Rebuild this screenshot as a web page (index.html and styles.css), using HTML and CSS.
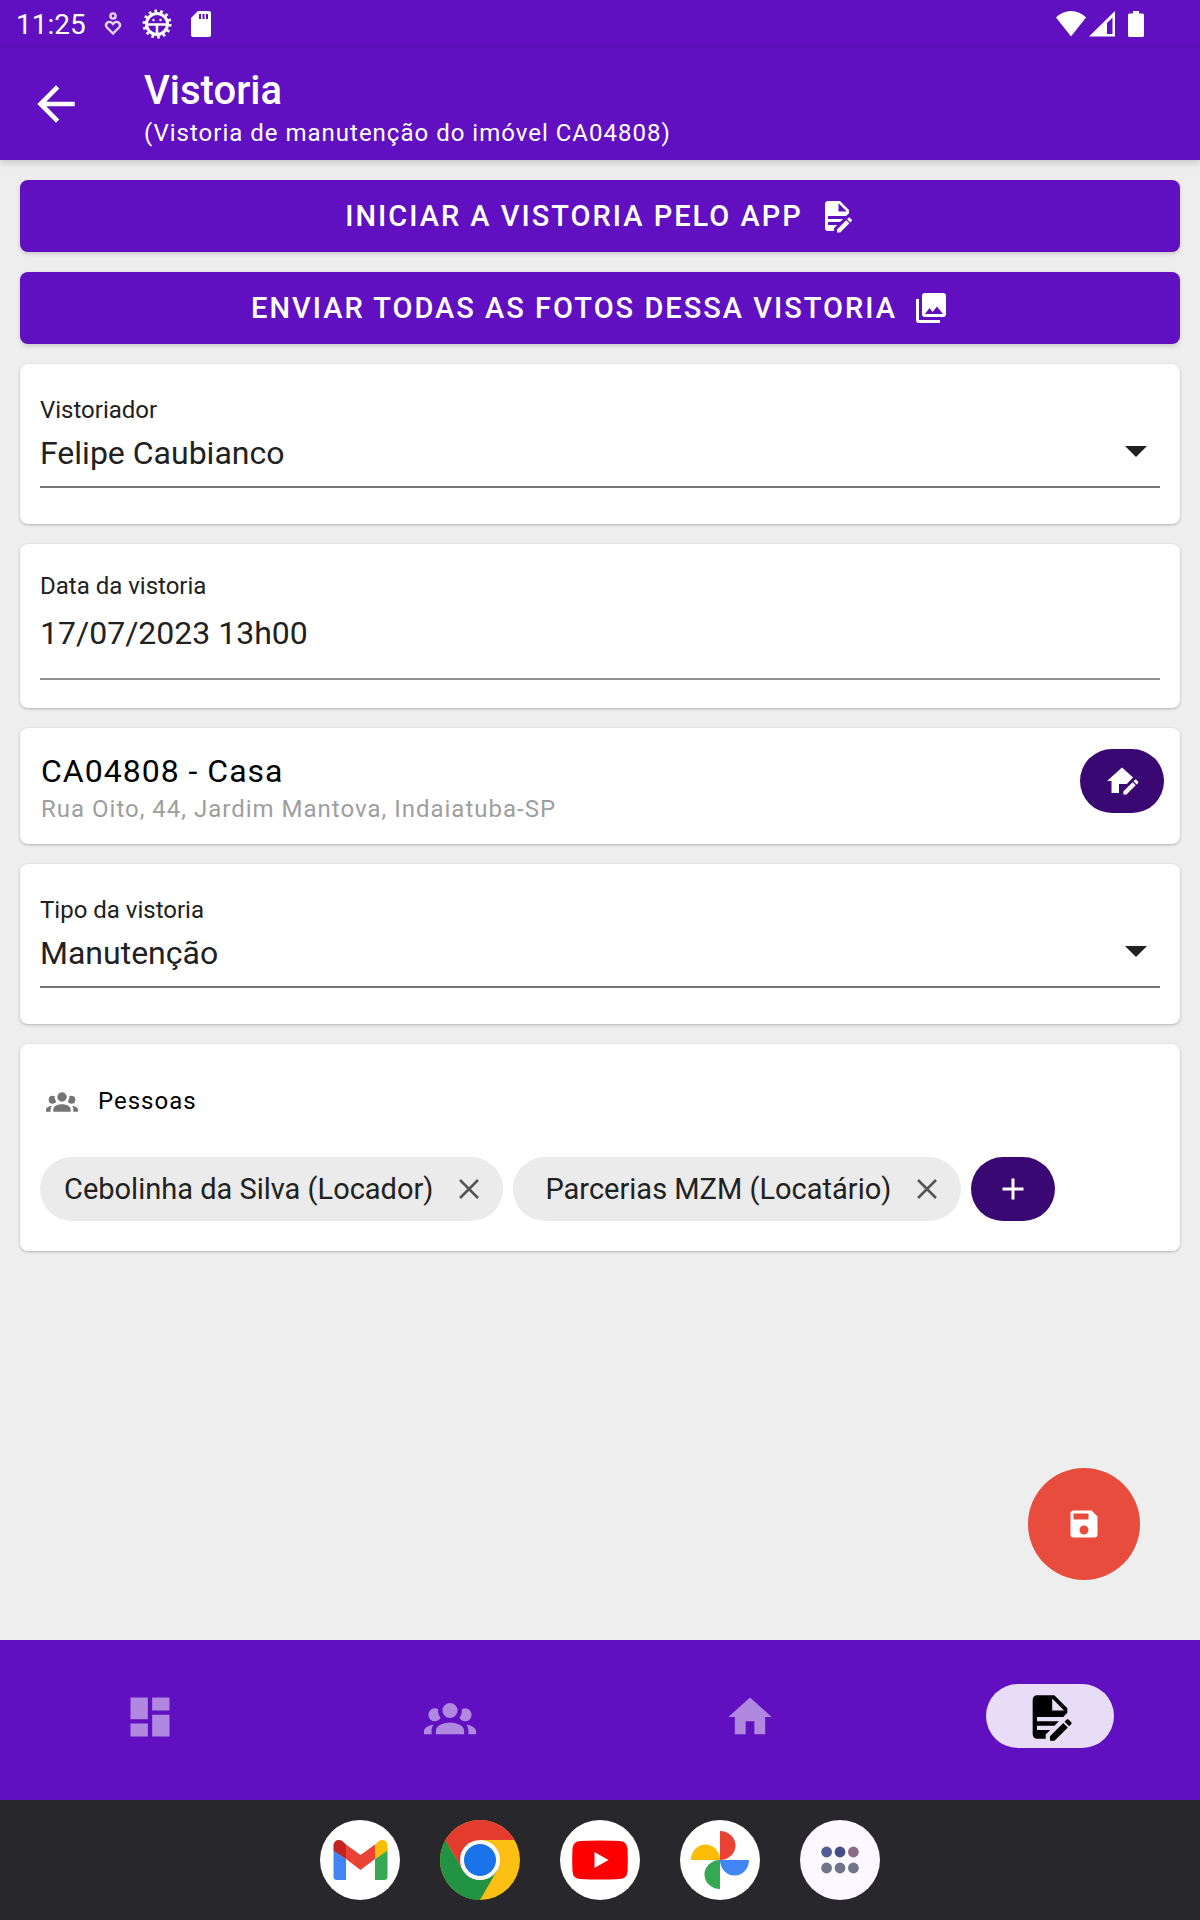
FILE: index.html
```
<!DOCTYPE html>
<html lang="pt-BR">
<head>
    <meta charset="UTF-8">
    <meta name="viewport" content="width=device-width, initial-scale=1.0">
    <title>Vistoria</title>
    <link rel="stylesheet" href="styles.css">
</head>
<body>
    <div class="status-bar">
        <span class="clock">11:25</span>
        <svg class="status-icon heart" viewBox="0 0 20 24" fill="none" stroke="#e3d3f5" stroke-width="2.4">
            <circle cx="10" cy="4" r="2.600"/>
            <path d="M10 21.500L4 15.500a3.400 3.400 0 0 1 0-4.600a3.400 3.400 0 0 1 4.800 0L10 12.100l1.200-1.200a3.400 3.400 0 0 1 4.800 0a3.400 3.400 0 0 1 0 4.600z"/>
        </svg>
        <svg class="status-icon gear" viewBox="0 0 30 30" fill="none" stroke="#fff">
            <circle cx="15" cy="15" r="13" stroke-width="3" stroke-dasharray="2.600 3.234"/>
            <circle cx="15" cy="15" r="10.500" stroke-width="3"/>
            <path d="M5 15.500h20M15 15.500V25" stroke-width="2.600"/>
            <circle cx="11.500" cy="11" r="1.200" fill="#fff" stroke="none"/>
            <circle cx="18.500" cy="11" r="1.200" fill="#fff" stroke="none"/>
        </svg>
        <svg class="status-icon sd" viewBox="0 0 20 26">
            <path fill="#fff" d="M7 0h11a2 2 0 0 1 2 2v22a2 2 0 0 1-2 2H2a2 2 0 0 1-2-2V7z"/>
            <path fill="#6010c0" d="M8 3h2v5H8zM11.500 3h2v5h-2zM15 3h2v5h-2z"/>
        </svg>
        <div class="status-right">
            <svg class="status-icon wifi" viewBox="0 0 30 26">
                <path fill="#fff" d="M0 6.500Q6.500 0 15 0t15 6.500L15 25.500z"/>
            </svg>
            <svg class="status-icon signal" viewBox="0 0 26 26">
                <path fill="#fff" fill-rule="evenodd" d="M26 0v25.500H0zM23.500 6.500L18 12v11h5.500z"/>
            </svg>
            <svg class="status-icon battery" viewBox="0 0 16 26">
                <path fill="#fff" d="M5 0h6v2.500h3.500A1.500 1.500 0 0 1 16 4v20.500a1.500 1.500 0 0 1-1.500 1.500h-13A1.500 1.500 0 0 1 0 24.500V4a1.500 1.500 0 0 1 1.500-1.500H5z"/>
            </svg>
        </div>
    </div>

    <header class="header">
        <a href="#voltar" class="back" aria-label="Voltar">
            <svg viewBox="0 0 24 24"><path d="M20 11H7.830l5.590-5.590L12 4l-8 8 8 8 1.410-1.410L7.830 13H20v-2z"/></svg>
        </a>
        <div class="header-text">
            <h1>Vistoria</h1>
            <p>(Vistoria de manutenção do imóvel CA04808)</p>
        </div>
    </header>

    <main class="content">
        <button type="button" class="action-button">
            <span>INICIAR A VISTORIA PELO APP</span>
            <svg class="icon" viewBox="0 0 24 24"><path d="M6,2C4.890,2 4,2.900 4,4V20A2,2 0 0,0 6,22H10V20.090L12.090,18H6V16H14.090L16.090,14H6V12H18.090L20,10.090V8L14,2H6M13,3.500L18.500,9H13V3.500M20.150,13C20,13 19.860,13.050 19.750,13.160L18.730,14.180L20.820,16.260L21.840,15.250C22.050,15.030 22.050,14.670 21.840,14.460L20.540,13.160C20.430,13.050 20.290,13 20.150,13M18.140,14.770L12,20.920V23H14.080L20.230,16.850L18.140,14.770Z"/></svg>
        </button>
        <button type="button" class="action-button">
            <span>ENVIAR TODAS AS FOTOS DESSA VISTORIA</span>
            <svg class="icon" viewBox="0 0 24 24"><path d="M22,16V4A2,2 0 0,0 20,2H8A2,2 0 0,0 6,4V16A2,2 0 0,0 8,18H20A2,2 0 0,0 22,16M11,12L13.030,14.710L16,11L20,16H8L11,12M2,6V20A2,2 0 0,0 4,22H18V20H4V6H2Z"/></svg>
        </button>

        <section class="card select-card">
            <label for="vistoriador">Vistoriador</label>
            <div class="select-wrap">
                <select id="vistoriador">
                    <option>Felipe Caubianco</option>
                </select>
                <svg class="arrow" viewBox="0 0 22 11"><path d="M0 0h22L11 11z"/></svg>
            </div>
        </section>

        <section class="card date-card">
            <label for="data">Data da vistoria</label>
            <input type="text" id="data" value="17/07/2023 13h00">
        </section>

        <section class="card property-card">
            <div class="property-text">
                <h2>CA04808 - Casa</h2>
                <p>Rua Oito, 44, Jardim Mantova, Indaiatuba-SP</p>
            </div>
            <button type="button" class="round-button" aria-label="Editar imóvel">
                <svg class="icon" viewBox="0 0 24 24">
                    <path d="M12 3L2 12H5V20H10V14H15.200L19.400 9.700z"/>
                    <path d="M21.050 11c-.150 0-.290.050-.400.160l-1.020 1.020 2.090 2.080 1.020-1.010c.210-.220.210-.580 0-.790l-1.300-1.300c-.110-.110-.250-.160-.390-.160M19.040 12.770L12.900 18.920V21h2.080l6.150-6.150z"/>
                </svg>
            </button>
        </section>

        <section class="card select-card">
            <label for="tipo">Tipo da vistoria</label>
            <div class="select-wrap">
                <select id="tipo">
                    <option>Manutenção</option>
                </select>
                <svg class="arrow" viewBox="0 0 22 11"><path d="M0 0h22L11 11z"/></svg>
            </div>
        </section>

        <section class="card people-card">
            <div class="people-title">
                <svg viewBox="0 0 24 24"><path d="M12,5.500A3.500,3.500 0 0,1 15.500,9A3.500,3.500 0 0,1 12,12.500A3.500,3.500 0 0,1 8.500,9A3.500,3.500 0 0,1 12,5.500M5,8C5.560,8 6.080,8.150 6.530,8.420C6.380,9.850 6.800,11.270 7.660,12.380C7.160,13.340 6.160,14 5,14A3,3 0 0,1 2,11A3,3 0 0,1 5,8M19,8A3,3 0 0,1 22,11A3,3 0 0,1 19,14C17.840,14 16.840,13.340 16.340,12.380C17.200,11.270 17.620,9.850 17.470,8.420C17.920,8.150 18.440,8 19,8M5.500,18.250C5.500,16.180 8.410,14.500 12,14.500C15.590,14.500 18.500,16.180 18.500,18.250V20H5.500V18.250M0,20V18.500C0,17.110 1.890,15.940 4.450,15.600C3.860,16.280 3.500,17.220 3.500,18.250V20H0M24,20H20.500V18.250C20.500,17.220 20.140,16.280 19.550,15.600C22.110,15.940 24,17.110 24,18.500V20Z"/></svg>
                <h3>Pessoas</h3>
            </div>
            <div class="chips">
                <div class="chip">
                    <span>Cebolinha da Silva (Locador)</span>
                    <button type="button" aria-label="Remover Cebolinha da Silva">
                        <svg viewBox="0 0 20 20"><path d="M1 1l18 18M19 1L1 19"/></svg>
                    </button>
                </div>
                <div class="chip chip-wide">
                    <span>Parcerias MZM (Locatário)</span>
                    <button type="button" aria-label="Remover Parcerias MZM">
                        <svg viewBox="0 0 20 20"><path d="M1 1l18 18M19 1L1 19"/></svg>
                    </button>
                </div>
                <button type="button" class="round-button" aria-label="Adicionar pessoa">
                    <svg class="icon" viewBox="0 0 24 24"><path d="M19,13H13V19H11V13H5V11H11V5H13V11H19V13Z"/></svg>
                </button>
            </div>
        </section>

        <button type="button" class="fab" aria-label="Salvar">
            <svg class="icon" viewBox="0 0 24 24"><path d="M15,9H5V5H15M12,19A3,3 0 0,1 9,16A3,3 0 0,1 12,13A3,3 0 0,1 15,16A3,3 0 0,1 12,19M17,3H5C3.890,3 3,3.900 3,5V19A2,2 0 0,0 5,21H19A2,2 0 0,0 21,19V7L17,3Z"/></svg>
        </button>
    </main>

    <nav class="bottom-nav">
        <a href="#painel" aria-label="Painel">
            <svg viewBox="0 0 24 24"><path d="M3 13h8V3H3v10zm0 8h8v-6H3v6zm10 0h8V11h-8v10zm0-18v6h8V3h-8z"/></svg>
        </a>
        <a href="#pessoas" aria-label="Pessoas">
            <svg viewBox="0 0 24 24"><path d="M12,5.500A3.500,3.500 0 0,1 15.500,9A3.500,3.500 0 0,1 12,12.500A3.500,3.500 0 0,1 8.500,9A3.500,3.500 0 0,1 12,5.500M5,8C5.560,8 6.080,8.150 6.530,8.420C6.380,9.850 6.800,11.270 7.660,12.380C7.160,13.340 6.160,14 5,14A3,3 0 0,1 2,11A3,3 0 0,1 5,8M19,8A3,3 0 0,1 22,11A3,3 0 0,1 19,14C17.840,14 16.840,13.340 16.340,12.380C17.200,11.270 17.620,9.850 17.470,8.420C17.920,8.150 18.440,8 19,8M5.500,18.250C5.500,16.180 8.410,14.500 12,14.500C15.590,14.500 18.500,16.180 18.500,18.250V20H5.500V18.250M0,20V18.500C0,17.110 1.890,15.940 4.450,15.600C3.860,16.280 3.500,17.220 3.500,18.250V20H0M24,20H20.500V18.250C20.500,17.220 20.140,16.280 19.550,15.600C22.110,15.940 24,17.110 24,18.500V20Z"/></svg>
        </a>
        <a href="#imoveis" aria-label="Imóveis">
            <svg viewBox="0 0 24 24"><path d="M10,20V14H14V20H19V12H22L12,3L2,12H5V20H10Z"/></svg>
        </a>
        <a href="#vistorias" class="active" aria-label="Vistorias">
            <svg viewBox="0 0 24 24"><path d="M6,2C4.890,2 4,2.900 4,4V20A2,2 0 0,0 6,22H10V20.090L12.090,18H6V16H14.090L16.090,14H6V12H18.090L20,10.090V8L14,2H6M13,3.500L18.500,9H13V3.500M20.150,13C20,13 19.860,13.050 19.750,13.160L18.730,14.180L20.820,16.260L21.840,15.250C22.050,15.030 22.050,14.670 21.840,14.460L20.540,13.160C20.430,13.050 20.290,13 20.150,13M18.140,14.770L12,20.920V23H14.080L20.230,16.850L18.140,14.770Z"/></svg>
        </a>
    </nav>

    <div class="dock">
        <a href="#gmail" aria-label="Gmail">
            <svg viewBox="0 0 80 80">
                <circle cx="40" cy="40" r="40" fill="#fff"/>
                <path fill="#4285f4" d="M13.500 30L26 39v21h-9a3.500 3.500 0 0 1-3.500-3.500z"/>
                <path fill="#34a853" d="M67.500 30L55 39v21h9a3.500 3.500 0 0 0 3.500-3.500z"/>
                <path fill="#ea4335" d="M26 24.500L40.500 35 55 24.500V39L40.500 50 26 39z"/>
                <path fill="#c5221f" d="M13.500 25.500c0-5 5.500-7 9-4.200L26 24.500V39l-12.500-8.500z"/>
                <path fill="#fbbc04" d="M67.500 25.500c0-5-5.500-7-9-4.200L55 24.500V39l12.500-8.500z"/>
            </svg>
        </a>
        <a href="#chrome" aria-label="Chrome">
            <svg viewBox="0 0 80 80">
                <circle cx="40" cy="40" r="40" fill="#fcc015"/>
                <path fill="#229342" d="M5.400 20L22.700 50l17.300 10 17.300-10L40 80A40 40 0 0 1 5.400 20z"/>
                <path fill="#e33b2e" d="M5.400 20a40 40 0 0 1 69.200 0H40L22.700 50z"/>
                <circle cx="40" cy="40" r="20" fill="#fff"/>
                <circle cx="40" cy="40" r="16" fill="#1a73e8"/>
            </svg>
        </a>
        <a href="#youtube" aria-label="YouTube">
            <svg viewBox="0 0 80 80">
                <circle cx="40" cy="40" r="40" fill="#fff"/>
                <path fill="#f00" d="M20 21q20-1 40 0 7 .500 7.500 7.500.700 11.500 0 23Q67 58.500 60 59q-20 1-40 0-7-.500-7.500-7.500-.700-11.500 0-23Q13 21.500 20 21z"/>
                <path fill="#fff" d="M34.500 32v16l14-8z"/>
            </svg>
        </a>
        <a href="#fotos" aria-label="Google Fotos">
            <svg viewBox="0 0 80 80">
                <circle cx="40" cy="40" r="40" fill="#fff"/>
                <path fill="#ea4335" d="M40 11a15.500 14.500 0 0 1 0 29z"/>
                <path fill="#4285f4" d="M69 40a14.500 15.500 0 0 1-29 0z"/>
                <path fill="#34a853" d="M40 69a15.500 14.500 0 0 1 0-29z"/>
                <path fill="#fbbc04" d="M11 40a14.500 15.500 0 0 1 29 0z"/>
            </svg>
        </a>
        <a href="#apps" aria-label="Todos os apps">
            <svg viewBox="0 0 80 80">
                <circle cx="40" cy="40" r="40" fill="#fcf8ff"/>
                <circle cx="26.600" cy="32" r="5.400" fill="#515c95"/>
                <circle cx="40" cy="32" r="5.400" fill="#444d88"/>
                <circle cx="53.400" cy="32" r="5.400" fill="#8b6c86"/>
                <circle cx="26.600" cy="48" r="5.400" fill="#72748a"/>
                <circle cx="40" cy="48" r="5.400" fill="#72748a"/>
                <circle cx="53.400" cy="48" r="5.400" fill="#72748a"/>
            </svg>
        </a>
    </div>
</body>
</html>
```
FILE: styles.css
```
* {
    box-sizing: border-box;
}

body {
    font-family: Roboto, sans-serif;
    font-size: 24px;
    margin: 0;
    min-height: 100vh;
    display: flex;
    flex-direction: column;
    background-color: #eeeeee;
    color: #212121;
}

h1, h2, h3, p {
    margin: 0;
    font-weight: 400;
}

button, input, select {
    font-family: inherit;
    color: inherit;
    border: none;
    padding: 0;
    background: none;
}

button {
    cursor: pointer;
}

svg {
    display: block;
    flex-shrink: 0;
}

.icon {
    width: 36px;
    height: 36px;
    fill: white;
}

.status-bar {
    height: 48px;
    padding: 0 56px 0 16px;
    background-color: #6010c0;
    color: white;
    display: flex;
    align-items: center;
}

.clock {
    font-size: 28px;
    margin-right: 17px;
}

.status-icon {
    height: 26px;
}

.heart {
    width: 20px;
    height: 24px;
    margin-right: 19px;
}

.gear {
    width: 30px;
    height: 30px;
    margin-right: 19px;
}

.sd {
    width: 20px;
}

.status-right {
    display: flex;
    margin-left: auto;
}

.wifi {
    width: 30px;
    margin-right: 3px;
}

.signal {
    width: 26px;
    margin-right: 13px;
}

.battery {
    width: 16px;
}

.header {
    height: 112px;
    padding: 0 28px;
    background-color: #6010c0;
    color: white;
    display: flex;
    align-items: center;
    gap: 60px;
    box-shadow: 0 2px 8px rgba(0, 0, 0, 0.2);
}

.back svg {
    width: 56px;
    height: 56px;
    fill: white;
}

.header-text {
    padding-top: 14px;
}

.header h1 {
    font-size: 40px;
    font-weight: 500;
    line-height: 44px;
}

.header p {
    line-height: 40px;
    letter-spacing: 1px;
}

.content {
    flex: 1;
    position: relative;
    padding: 20px;
    display: flex;
    flex-direction: column;
    gap: 20px;
}

.action-button {
    height: 72px;
    display: flex;
    align-items: center;
    justify-content: center;
    gap: 16px;
    background-color: #6010c0;
    color: white;
    border-radius: 8px;
    font-size: 29px;
    font-weight: 500;
    letter-spacing: 2px;
    box-shadow: 0 2px 4px rgba(0, 0, 0, 0.15);
}

.card {
    background-color: white;
    border-radius: 8px;
    box-shadow: 0 1px 3px rgba(0, 0, 0, 0.25);
}

.card label {
    display: block;
    line-height: 28px;
}

.select-card {
    padding: 32px 20px 36px;
}

.select-wrap {
    display: grid;
    align-items: center;
}

.select-wrap select {
    grid-area: 1 / 1;
    width: 100%;
    height: 64px;
    padding-bottom: 4px;
    appearance: none;
    border-bottom: 2px solid #757575;
    border-radius: 0;
    font-size: 32px;
}

.arrow {
    grid-area: 1 / 1;
    justify-self: end;
    width: 22px;
    height: 11px;
    margin: 0 13px 10px 0;
    fill: #212121;
    pointer-events: none;
}

.date-card {
    padding: 28px 20px;
}

.date-card input {
    display: block;
    width: 100%;
    height: 80px;
    padding-bottom: 12px;
    border-bottom: 2px solid #909090;
    font-size: 32px;
}

.property-card {
    padding: 21px 16px 19px 21px;
    display: flex;
    justify-content: space-between;
    align-items: flex-start;
}

.property-text h2 {
    color: black;
    font-size: 32px;
    line-height: 44px;
    letter-spacing: 1px;
}

.property-text p {
    color: #9e9e9e;
    line-height: 32px;
    letter-spacing: 1px;
}

.round-button {
    width: 84px;
    height: 64px;
    display: flex;
    align-items: center;
    justify-content: center;
    border-radius: 32px;
    background-color: #3a0872;
}

.people-card {
    padding: 32px 20px 30px;
}

.people-title {
    height: 50px;
    padding-left: 6px;
    display: flex;
    align-items: center;
    gap: 20px;
}

.people-title svg {
    width: 32px;
    height: 32px;
    fill: #757575;
}

.people-title h3 {
    color: black;
    font-size: 24px;
    letter-spacing: 1px;
}

.chips {
    margin-top: 31px;
    display: flex;
    flex-wrap: wrap;
    gap: 10px;
}

.chip {
    height: 64px;
    padding: 0 24px;
    display: flex;
    align-items: center;
    gap: 26px;
    border-radius: 32px;
    background-color: #ebebeb;
    font-size: 29px;
}

.chip-wide {
    padding-left: 32px;
}

.chip svg {
    width: 20px;
    height: 20px;
    stroke: #555;
    stroke-width: 2.5;
}

.fab {
    position: absolute;
    right: 60px;
    bottom: 60px;
    width: 112px;
    height: 112px;
    display: flex;
    align-items: center;
    justify-content: center;
    border-radius: 50%;
    background-color: #e74c3c;
}

.bottom-nav {
    height: 160px;
    padding-top: 44px;
    display: grid;
    grid-template-columns: repeat(4, 1fr);
    justify-items: center;
    align-items: start;
    background-color: #6010c0;
}

.bottom-nav a {
    width: 128px;
    height: 64px;
    padding-top: 2px;
    display: flex;
    align-items: center;
    justify-content: center;
    border-radius: 32px;
}

.bottom-nav svg {
    width: 52px;
    height: 52px;
    fill: #b088e0;
}

.bottom-nav .active {
    background-color: #e7ddf7;
}

.bottom-nav .active svg {
    fill: black;
}

.dock {
    height: 120px;
    display: flex;
    align-items: center;
    justify-content: center;
    gap: 40px;
    background-color: #28272c;
}

.dock svg {
    width: 80px;
    height: 80px;
}
```
